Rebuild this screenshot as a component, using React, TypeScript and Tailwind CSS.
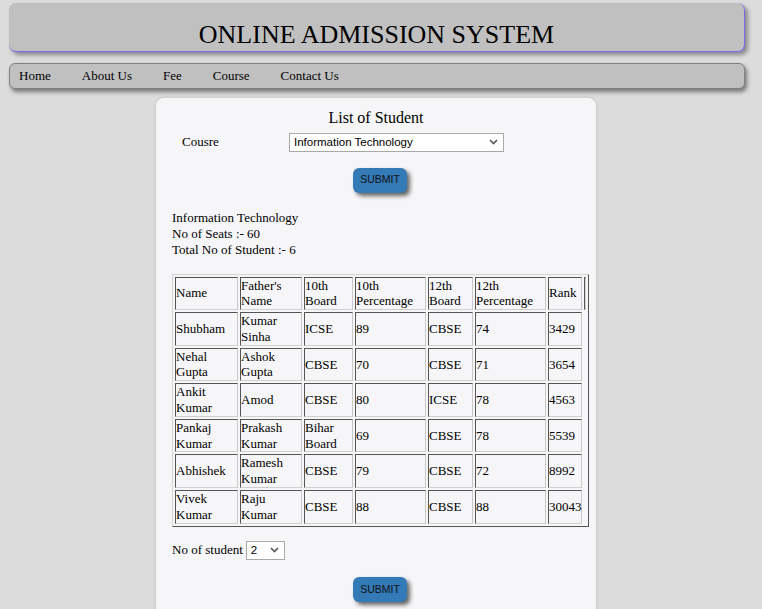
import { useState } from 'react';

type Student = {
  name: string;
  father: string;
  board10: string;
  pct10: string;
  board12: string;
  pct12: string;
  rank: string;
};

const students: Student[] = [
  { name: 'Shubham', father: 'Kumar Sinha', board10: 'ICSE', pct10: '89', board12: 'CBSE', pct12: '74', rank: '3429' },
  { name: 'Nehal Gupta', father: 'Ashok Gupta', board10: 'CBSE', pct10: '70', board12: 'CBSE', pct12: '71', rank: '3654' },
  { name: 'Ankit Kumar', father: 'Amod', board10: 'CBSE', pct10: '80', board12: 'ICSE', pct12: '78', rank: '4563' },
  { name: 'Pankaj Kumar', father: 'Prakash Kumar', board10: 'Bihar Board', pct10: '69', board12: 'CBSE', pct12: '78', rank: '5539' },
  { name: 'Abhishek', father: 'Ramesh Kumar', board10: 'CBSE', pct10: '79', board12: 'CBSE', pct12: '72', rank: '8992' },
  { name: 'Vivek Kumar', father: 'Raju Kumar', board10: 'CBSE', pct10: '88', board12: 'CBSE', pct12: '88', rank: '30043' },
];

const navItems = ['Home', 'About Us', 'Fee', 'Course', 'Contact Us'];

const cellClass =
  'border border-t-[#555] border-l-[#555] border-r-[#c8c8c8] border-b-[#d0d0d0] p-0 text-left font-normal align-middle whitespace-normal';

function Chevron() {
  return (
    <svg width="9" height="6" viewBox="0 0 9 6" className="pointer-events-none absolute right-[6px] top-[7px]">
      <path d="M1 1 L4.5 4.5 L8 1" fill="none" stroke="#555" strokeWidth="1.6" />
    </svg>
  );
}

function SelectBox({
  value,
  options,
  onChange,
  className,
}: {
  value: string;
  options: string[];
  onChange: (v: string) => void;
  className: string;
}) {
  return (
    <div className={`relative h-[19px] ${className}`}>
      <select
        value={value}
        onChange={(e) => onChange(e.target.value)}
        className="h-full w-full appearance-none border border-[#a9a9a9] bg-white pl-[4px] pr-[16px] font-['Liberation_Sans',Arial,sans-serif] text-[11.5px] leading-[17px] text-black outline-none"
      >
        {options.map((o) => (
          <option key={o}>{o}</option>
        ))}
      </select>
      <Chevron />
    </div>
  );
}

function SubmitButton() {
  return (
    <button
      type="button"
      className="ml-[197px] flex h-[25px] w-[54px] items-center justify-center rounded-[6px] bg-[#337ab7] font-['Liberation_Sans',Arial,sans-serif] text-[10.5px] text-[#111] shadow-[3px_3px_4px_#666]"
    >
      SUBMIT
    </button>
  );
}

export default function App() {
  const [course, setCourse] = useState('Information Technology');
  const [count, setCount] = useState('2');

  return (
    <div className="min-h-[609px] overflow-hidden bg-[#dcdcdc] pt-[3px] font-['Liberation_Serif','Times_New_Roman',serif] text-black">
      {/* header */}
      <div className="ml-[9px] h-[49px] w-[736px] rounded-[7px] border-r border-b border-[#7b68ee] bg-[#c0c0c0] pt-[17px] text-center text-[26px] leading-[30px] shadow-[3px_3px_4px_#8a8a8a]">
        ONLINE ADMISSION SYSTEM
      </div>

      {/* nav */}
      <div className="mt-[11px] ml-[9px] flex h-[26px] w-[736px] items-center gap-[31px] rounded-[6px] border border-[#808080] bg-[#c0c0c0] pb-[2px] pl-[9px] text-[13px] leading-[15px] shadow-[2px_3px_4px_#777]">
        {navItems.map((item) => (
          <span key={item}>{item}</span>
        ))}
      </div>

      {/* card */}
      <div className="mt-[9px] ml-[156px] w-[440px] rounded-[8px] bg-[#f6f6f8] pt-[11px] pb-[20px] shadow-[0_0_3px_rgba(0,0,0,0.15)]">
        <div className="text-center text-[16px] leading-[18px]">List of Student</div>

        <div className="mt-[5px] flex items-center text-[13px]">
          <span className="ml-[26px] w-[107px]">Cousre</span>
          <SelectBox
            value={course}
            onChange={setCourse}
            options={['Information Technology', 'Computer Science', 'Mechanical', 'Civil']}
            className="w-[215px]"
          />
        </div>

        <div className="mt-[16px]">
          <SubmitButton />
        </div>

        <div className="mt-[17px] ml-[16px] text-[13px] leading-[16px]">
          <div>{course}</div>
          <div>No of Seats :- 60</div>
          <div>Total No of Student :- 6</div>
        </div>

        <table className="mt-[16px] ml-[16px] w-[417px] table-fixed border-separate border-spacing-[2px] border border-t-[#d4d4d4] border-l-[#d4d4d4] border-r-[#555] border-b-[#555] text-[13px] leading-[15.8px]">
          <thead>
            <tr>
              <th className={`${cellClass} w-[63px]`}>Name</th>
              <th className={`${cellClass} w-[62px]`}>Father's Name</th>
              <th className={`${cellClass} w-[49px]`}>10th Board</th>
              <th className={`${cellClass} w-[71px]`}>10th Percentage</th>
              <th className={`${cellClass} w-[45px]`}>12th Board</th>
              <th className={`${cellClass} w-[71px]`}>12th Percentage</th>
              <th className={`${cellClass} w-[34px]`}>Rank</th>
              <th className="w-[2px] border border-l-[#555] border-r-[#d0d0d0] border-t-[#555] border-b-[#d0d0d0] p-0"></th>
            </tr>
          </thead>
          <tbody>
            {students.map((s) => (
              <tr key={s.rank}>
                <td className={cellClass}>{s.name}</td>
                <td className={cellClass}>{s.father}</td>
                <td className={cellClass}>{s.board10}</td>
                <td className={cellClass}>{s.pct10}</td>
                <td className={cellClass}>{s.board12}</td>
                <td className={cellClass}>{s.pct12}</td>
                <td className={cellClass}>{s.rank}</td>
              </tr>
            ))}
          </tbody>
        </table>

        <div className="mt-[13px] ml-[16px] flex items-center text-[13px]">
          <span>No of student</span>
          <SelectBox
            value={count}
            onChange={setCount}
            options={['1', '2', '3', '4', '5', '6']}
            className="ml-[3px] w-[39px]"
          />
        </div>

        <div className="mt-[18px]">
          <SubmitButton />
        </div>
      </div>
    </div>
  );
}
